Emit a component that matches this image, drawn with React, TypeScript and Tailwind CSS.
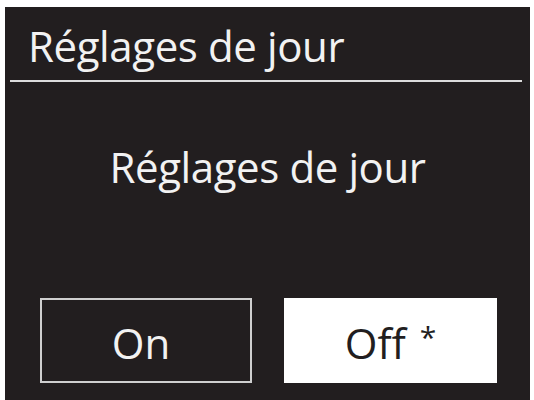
export default function App() {
  return (
    <div className="w-[534px] h-[400px] bg-white pl-[5px] pt-[7px] pr-[4px] overflow-hidden" style={{ fontFamily: '"Open Sans", "Noto Sans", sans-serif' }}>
      <div className="h-full bg-[#221e1f] flex flex-col text-[#f2f2f2]">
        {/* header */}
        <div className="h-[73px] pl-[23px] pt-[15px]">
          <div className="text-[42px] leading-[48px] tracking-[-0.4px]">Réglages de jour</div>
        </div>
        <div className="ml-[5px] mr-[8px] h-[2px] bg-[#dcdcdc]" />

        <div className="mt-[61px] text-center text-[42px] leading-[48px] tracking-[-0.4px]">Réglages de jour</div>

        {/* buttons */}
        <div className="mt-[107px] flex gap-[32px] pl-[35px]">
          <div className="w-[212px] h-[85px] border-2 border-[#cfcfcf] flex items-center justify-center text-[42px] leading-none pt-[4px] pr-[10px]">On</div>
          <div className="w-[213px] h-[85px] bg-white text-[#221e1f] flex items-center justify-center text-[42px] leading-none pt-[4px]">
            Off<span className="ml-[14px] text-[30px] self-start mt-[20px]">*</span>
          </div>
        </div>
      </div>
    </div>
  )
}
